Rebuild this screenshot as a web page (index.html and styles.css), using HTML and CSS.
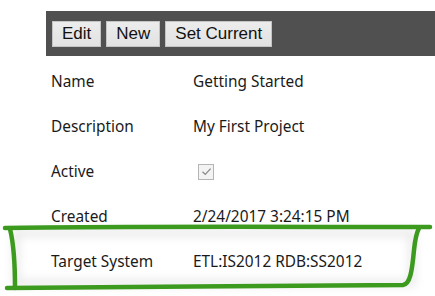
FILE: index.html
```html
<!DOCTYPE html>
<html lang="en">
<head>
    <meta charset="UTF-8">
    <title>Project</title>
    <link rel="stylesheet" href="styles.css">
</head>
<body>
    <div class="page">
        <div class="toolbar">
            <button>Edit</button>
            <button>New</button>
            <button>Set Current</button>
        </div>
        <div class="details">
            <div class="row"><span class="label">Name</span><span class="value">Getting Started</span></div>
            <div class="row"><span class="label">Description</span><span class="value">My First Project</span></div>
            <div class="row">
                <span class="label">Active</span>
                <span class="value">
                    <span class="check">
                        <svg width="13" height="13" viewBox="0 0 13 13"><path d="M2.5 6.8 L5.3 9.4 L10.6 3.6" fill="none" stroke="#8a8a8a" stroke-width="1.3"/></svg>
                    </span>
                </span>
            </div>
            <div class="row"><span class="label">Created</span><span class="value">2/24/2017 3:24:15 PM</span></div>
            <div class="row"><span class="label">Target System</span><span class="value">ETL:IS2012 RDB:SS2012</span></div>
        </div>
    </div>

    <!-- hand drawn highlight around the last row -->
    <svg class="highlight" width="435" height="296" viewBox="0 0 435 296">
        <defs>
            <filter id="soft" x="-20%" y="-50%" width="140%" height="200%">
                <feGaussianBlur stdDeviation="5"/>
            </filter>
        </defs>
        <rect x="16" y="233" width="396" height="50" fill="none" stroke="rgba(0,0,0,0.10)" stroke-width="6" filter="url(#soft)"/>
        <path d="M5 228 C120 226 300 227 430 227" fill="none" stroke="#3c9a1e" stroke-width="4.5" stroke-linecap="round"/>
        <path d="M10 229 C14 245 15 268 15 288" fill="none" stroke="#3c9a1e" stroke-width="4.5" stroke-linecap="round"/>
        <path d="M7 288 C120 287 300 286 403 285 C410 284 412 272 414 250 C415 240 417 232 419 228" fill="none" stroke="#3c9a1e" stroke-width="4.5" stroke-linecap="round"/>
    </svg>
</body>
</html>
```

FILE: styles.css
```css
* {
    margin: 0;
    padding: 0;
    box-sizing: border-box;
}

body {
    background: #ffffff;
    font-family: 'Noto Sans', 'Open Sans', sans-serif;
    overflow: hidden;
}

.page {
    padding: 11px 0 0 46px;
}

.toolbar {
    display: flex;
    gap: 5px;
    height: 45px;
    padding: 10px 5px 10px 6px;
    background: #505050;
}

.toolbar button {
    height: 26px;
    padding: 0 9px;
    font-family: 'Liberation Sans', Arial, sans-serif;
    font-size: 17px;
    color: #111111;
    background: linear-gradient(#ececec, #e2e2e2);
    border: 1px solid #c4c4c4;
    border-radius: 0;
}

.details {
    padding-left: 5px;
}

.row {
    display: flex;
    align-items: center;
    height: 45px;
    font-size: 15.4px;
    color: #1a1a1a;
}

.row:first-child {
    margin-top: 3px;
}

.label {
    width: 142px;
}

.check {
    display: flex;
    align-items: center;
    justify-content: center;
    width: 16px;
    height: 16px;
    margin: 0 0 0 5px;
    background: #f3f3f3;
    border: 1px solid #b4b4b4;
}

.highlight {
    position: absolute;
    top: 0;
    left: 0;
    pointer-events: none;
}
```
